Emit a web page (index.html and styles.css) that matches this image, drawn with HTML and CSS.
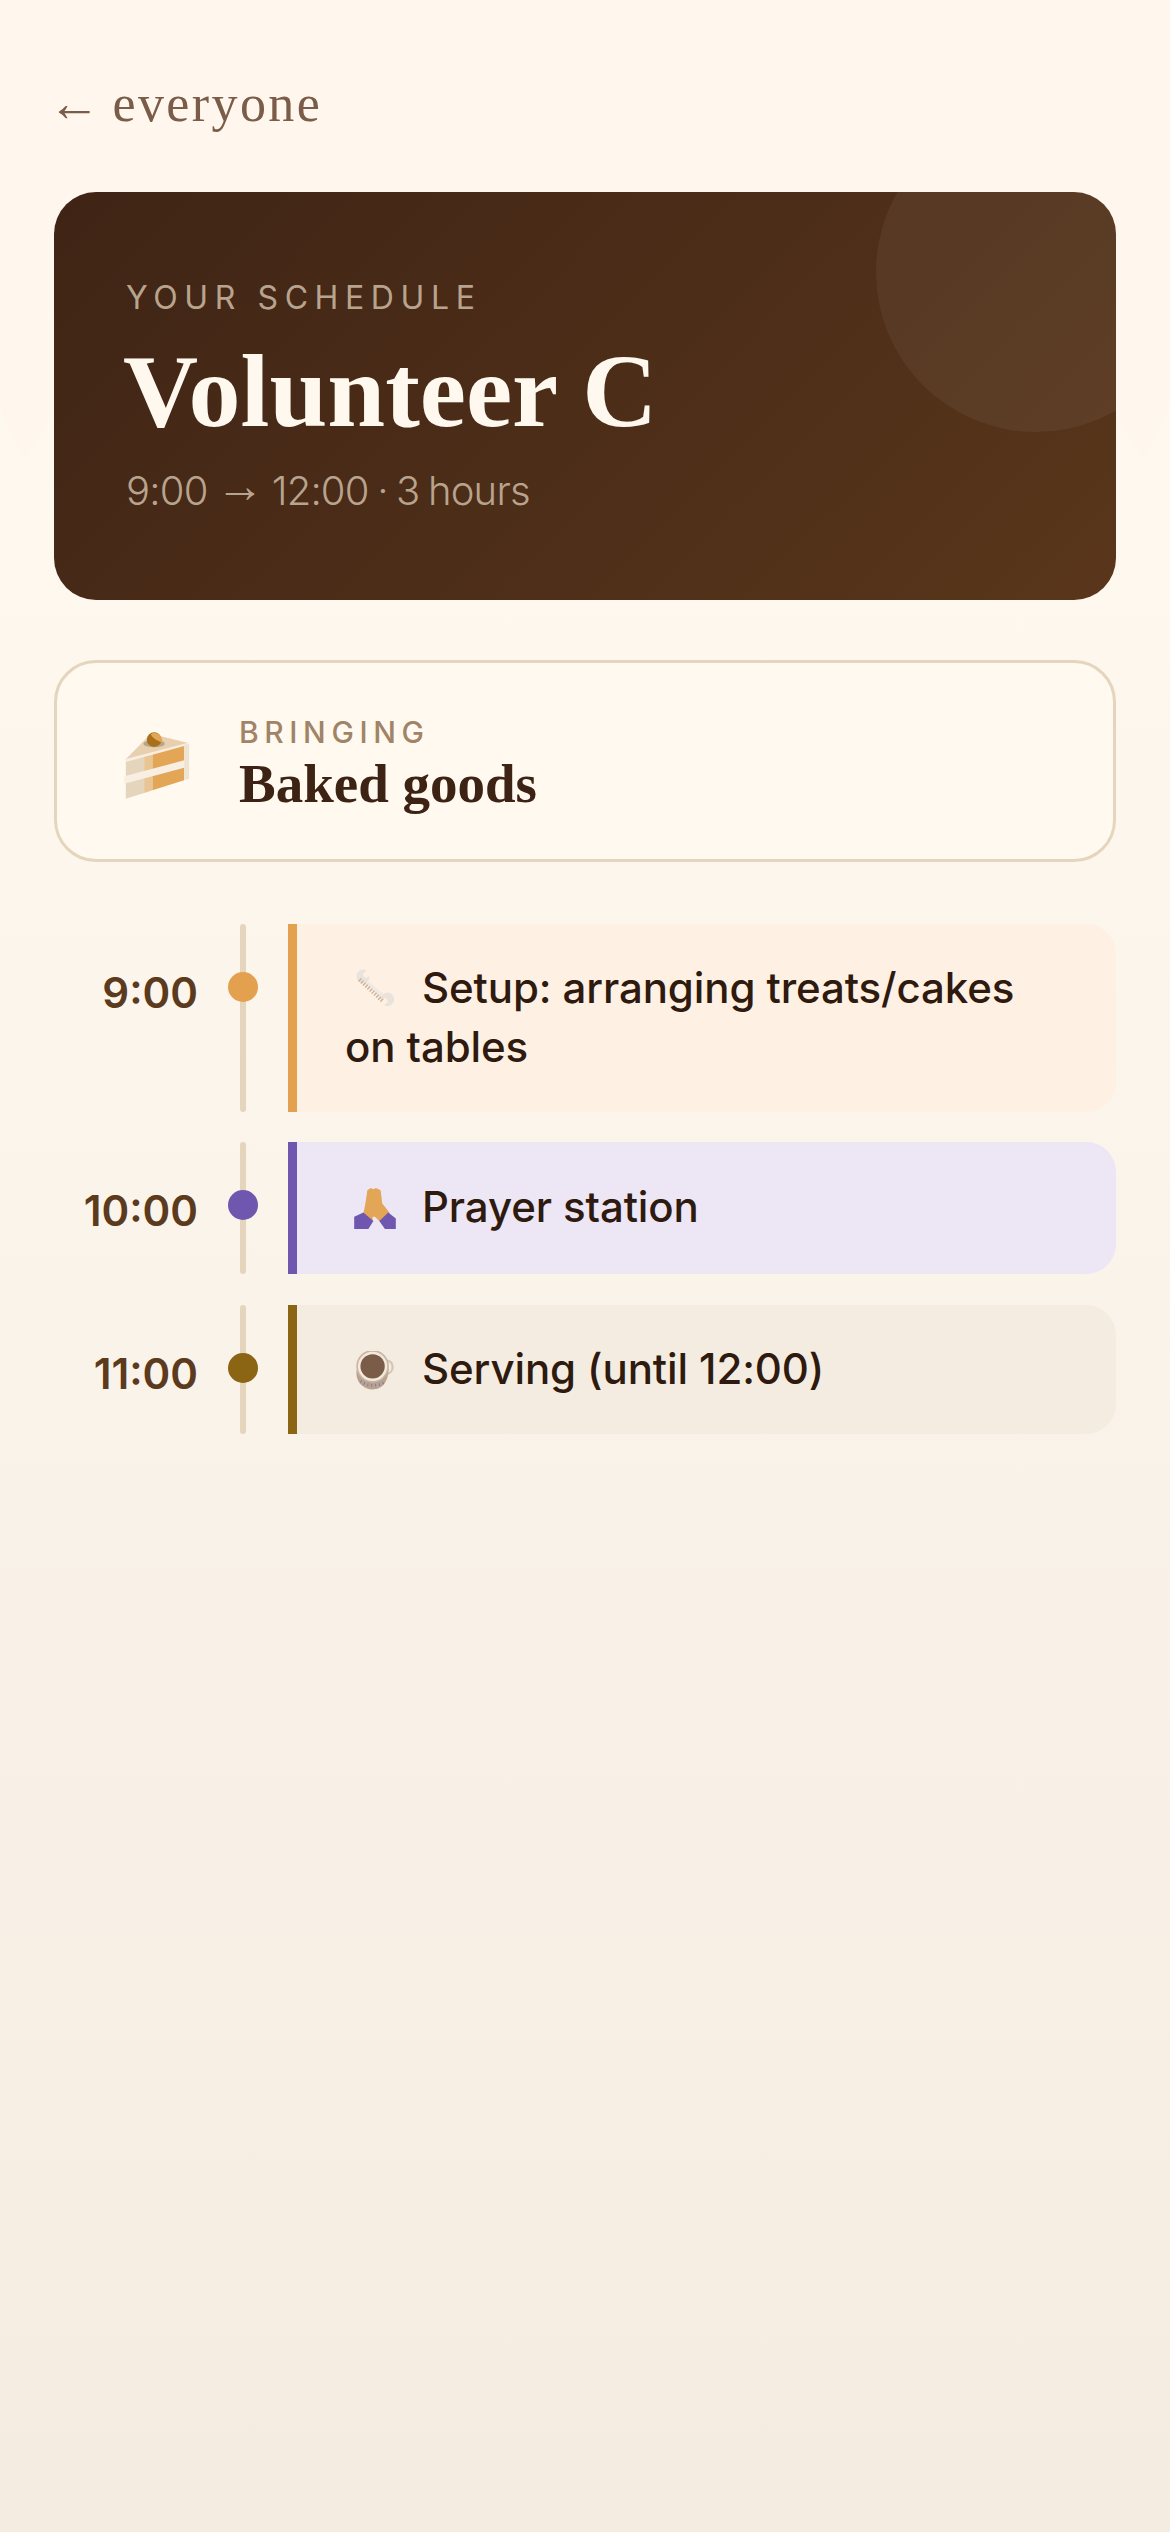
FILE: index.html
```html
<!DOCTYPE html>
<html lang="en">

<head>
  <meta charset="UTF-8">
  <meta name="viewport" content="width=device-width, initial-scale=1.0">
  <title>Volunteer C</title>
  <link rel="stylesheet" href="styles.css">
</head>

<body>
  <div class="glow"></div>
  <div class="page">
    <a class="back" href="#"><span class="back-arrow">←</span><span>everyone</span></a>

    <div class="hero">
      <div class="hero-circle"></div>
      <p class="hero-label">YOUR SCHEDULE</p>
      <h1 class="hero-name">Volunteer C</h1>
      <p class="hero-time">9:00 <span class="time-arrow">→</span> 12:00 · 3 hours</p>
    </div>

    <div class="bringing">
      <svg class="cake" viewBox="72 62 193 204">
        <polygon points="72,150 150,70 262,98 80,148" fill="#e8cfae"/>
        <polygon points="75,146 262,97 265,107 75,158" fill="#f8ede0"/>
        <polygon points="75,155 130,140 130,248 75,265" fill="#e6d5bd"/>
        <polygon points="130,140 155,133 155,240 130,248" fill="#e8c594"/>
        <polygon points="155,133 250,107 250,210 155,240" fill="#e3a657"/>
        <polygon points="250,104 265,100 265,205 250,210" fill="#efe3d3"/>
        <polygon points="70,198 250,150 250,172 70,220" fill="#f9eee2"/>
        <ellipse cx="160" cy="100" rx="32" ry="11" fill="#b8a48e"/>
        <ellipse cx="160" cy="88" rx="22" ry="22" fill="#a8701a"/>
        <path d="M150 72 C165 60 188 75 184 98 C170 90 155 85 150 72Z" fill="#e3a657"/>
      </svg>
      <div class="bringing-text">
        <p class="bringing-label">BRINGING</p>
        <p class="bringing-name">Baked goods</p>
      </div>
    </div>

    <div class="timeline">
      <div class="row">
        <div class="time">9:00</div>
        <div class="track"><span class="dot dot-orange"></span></div>
        <div class="task task-orange">
          <svg class="icon icon-wrench" viewBox="42 50 120 115">
            <path d="M65 85 L130 140" stroke="#efe9e2" stroke-width="14" fill="none"/>
            <path d="M62 55 C45 60 40 80 55 92 C68 102 85 92 86 75 L72 80 L64 68 L76 58 C72 54 66 54 62 55Z" fill="#e9e3dc"/>
            <path d="M144 165 C161 160 166 140 151 128 C138 118 121 128 120 145 L134 140 L142 152 L130 162 C134 166 140 166 144 165Z" fill="#e9e3dc"/>
            <path d="M55 85 L125 150" stroke="#c9b199" stroke-width="12" stroke-dasharray="4 5" fill="none"/>
          </svg>Setup: arranging treats/cakes on tables
        </div>
      </div>
      <div class="row">
        <div class="time">10:00</div>
        <div class="track"><span class="dot dot-purple"></span></div>
        <div class="task task-purple">
          <svg class="icon icon-pray" viewBox="42 48 126 124">
            <polygon points="82,55 92,48 100,52 108,48 122,55 127,95 135,105 150,124 120,150 105,135 98,135 98,150 70,124 75,100" fill="#e3a657"/>
            <polygon points="42,135 70,122 100,148 85,172 42,172" fill="#6f57b0"/>
            <polygon points="168,172 168,140 145,122 118,148 135,172" fill="#6f57b0"/>
          </svg>Prayer station
        </div>
      </div>
      <div class="row">
        <div class="time">11:00</div>
        <div class="track"><span class="dot dot-brown"></span></div>
        <div class="task task-brown">
          <svg class="icon icon-coffee" viewBox="40 40 125 122">
            <path d="M135 70 C162 66 166 106 140 112" stroke="#d6c6b4" stroke-width="7" fill="none"/>
            <path d="M45 100 C40 140 70 162 100 160 C130 158 145 130 145 95Z" fill="#b8a48e"/>
            <circle cx="95" cy="88" r="51" fill="#c9b59f"/>
            <circle cx="95" cy="88" r="46" fill="#f3e9de"/>
            <circle cx="95" cy="88" r="38" fill="#7a5c48"/>
            <path d="M58 134 C75 152 118 152 136 134" stroke="#7f72b8" stroke-width="9" stroke-dasharray="3 9" fill="none"/>
          </svg>Serving (until 12:00)
        </div>
      </div>
    </div>
  </div>
</body>

</html>
```

FILE: styles.css
```css
* {
  margin: 0;
  padding: 0;
  box-sizing: border-box;
}

body {
  position: relative;
  background: linear-gradient(180deg, #fff8ee 0%, #fef8ef 20%, #f5ece1 100%);
  min-height: 2532px;
  font-family: "Inter", "Liberation Sans", sans-serif;
}

/* faint warm wash at the top, only its tips show beside the hero */
.glow {
  position: absolute;
  top: 0;
  left: 0;
  width: 100%;
  height: 460px;
  background: #fff7ee;
  clip-path: polygon(0 0, 100% 0, 100% 400px, 1165px 420px, 1143px 460px, 1121px 420px, 1116px 400px, 54px 400px, 49px 420px, 25px 460px, 5px 420px, 0 400px);
}

.page {
  position: relative;
  padding: 74px 54px 0;
}

/* back link */
.back {
  display: flex;
  gap: 10px;
  height: 58px;
  font-family: "Liberation Serif", serif;
  font-size: 52px;
  line-height: 60px;
  letter-spacing: 2.4px;
  color: #7a5c48;
  text-decoration: none;
}

.back-arrow {
  margin-left: -6px;
}

/* dark header card */
.hero {
  position: relative;
  overflow: hidden;
  height: 408px;
  margin-top: 60px;
  padding: 86px 72px 0;
  border-radius: 42px;
  background: linear-gradient(135deg, #3f2415 0%, #59361b 100%);
}

.hero-circle {
  position: absolute;
  top: -80px;
  right: -80px;
  width: 320px;
  height: 320px;
  border-radius: 50%;
  background: rgba(255, 255, 255, 0.05);
}

.hero-label {
  font-size: 32px;
  line-height: 40px;
  letter-spacing: 6.6px;
  color: #b8a48e;
}

.hero-name {
  margin-top: 18px;
  margin-left: -3px;
  font-family: "Liberation Serif", serif;
  font-size: 104px;
  line-height: 110px;
  font-weight: 700;
  color: #fff8ee;
}

.hero-time {
  margin-top: 20px;
  font-size: 40px;
  line-height: 50px;
  font-weight: 300;
  letter-spacing: -0.8px;
  word-spacing: -2px;
  color: #b8a48e;
}

.time-arrow {
  font-family: "Liberation Serif", serif;
  font-size: 48px;
  line-height: 40px;
  vertical-align: 3px;
}

/* bringing card */
.bringing {
  display: flex;
  align-items: center;
  gap: 49px;
  height: 202px;
  margin-top: 60px;
  padding-left: 67px;
  border: 3px solid #e6d5bd;
  border-radius: 42px;
  background: #fff9f0;
}

.cake {
  width: 66px;
  height: 68px;
  flex: none;
  margin-top: 7px;
}

.bringing-text {
  padding-top: 6px;
}

.bringing-label {
  font-size: 30px;
  line-height: 36px;
  letter-spacing: 5.6px;
  font-weight: 500;
  color: #a08468;
}

.bringing-name {
  margin-top: 4px;
  font-family: "Liberation Serif", serif;
  font-size: 55px;
  line-height: 60px;
  font-weight: 700;
  color: #3d2314;
}

/* timeline */
.timeline {
  display: flex;
  flex-direction: column;
  gap: 30.5px;
  margin-top: 62px;
}

.row {
  display: flex;
}

.time {
  width: 144px;
  flex: none;
  padding-top: 40px;
  font-size: 42px;
  line-height: 58px;
  font-weight: 600;
  text-align: right;
  color: #5c3a1e;
}

.track {
  position: relative;
  width: 30px;
  flex: none;
  margin-left: 30px;
  margin-right: 30px;
}

.track::before {
  content: "";
  display: block;
  width: 6px;
  height: 100%;
  margin: 0 auto;
  border-radius: 3px;
  background: #e6d5bd;
}

.dot {
  position: absolute;
  top: 48px;
  left: 0;
  width: 30px;
  height: 30px;
  border-radius: 50%;
}

.dot-orange { background: #e3a14f; }
.dot-purple { background: #6f57b0; }
.dot-brown { background: #8b6414; }

.task {
  flex: 1;
  padding: 35.2px 48px;
  border-left: 9px solid;
  border-radius: 0 30px 30px 0;
  font-size: 42px;
  line-height: 58.8px;
  font-weight: 530;
  letter-spacing: -0.1px;
  color: #2e1a0e;
}

.task-orange {
  border-left-color: #e3a14f;
  background: #fef0e3;
}

.task-purple {
  padding-top: 36px;
  padding-bottom: 37.2px;
  border-left-color: #6f57b0;
  background: #ede6f5;
}

.task-brown {
  padding-top: 35px;
  padding-bottom: 35.2px;
  border-left-color: #8b6414;
  background: #f5ece1;
}

/* emoji drawn by hand */
.icon {
  display: inline-block;
  margin-left: 9px;
  margin-right: 26px;
  width: 42px;
}

.icon-wrench {
  height: 38px;
  vertical-align: -3px;
}

.icon-pray {
  height: 41px;
  vertical-align: -7px;
}

.icon-coffee {
  height: 39px;
  vertical-align: -6px;
}
```
